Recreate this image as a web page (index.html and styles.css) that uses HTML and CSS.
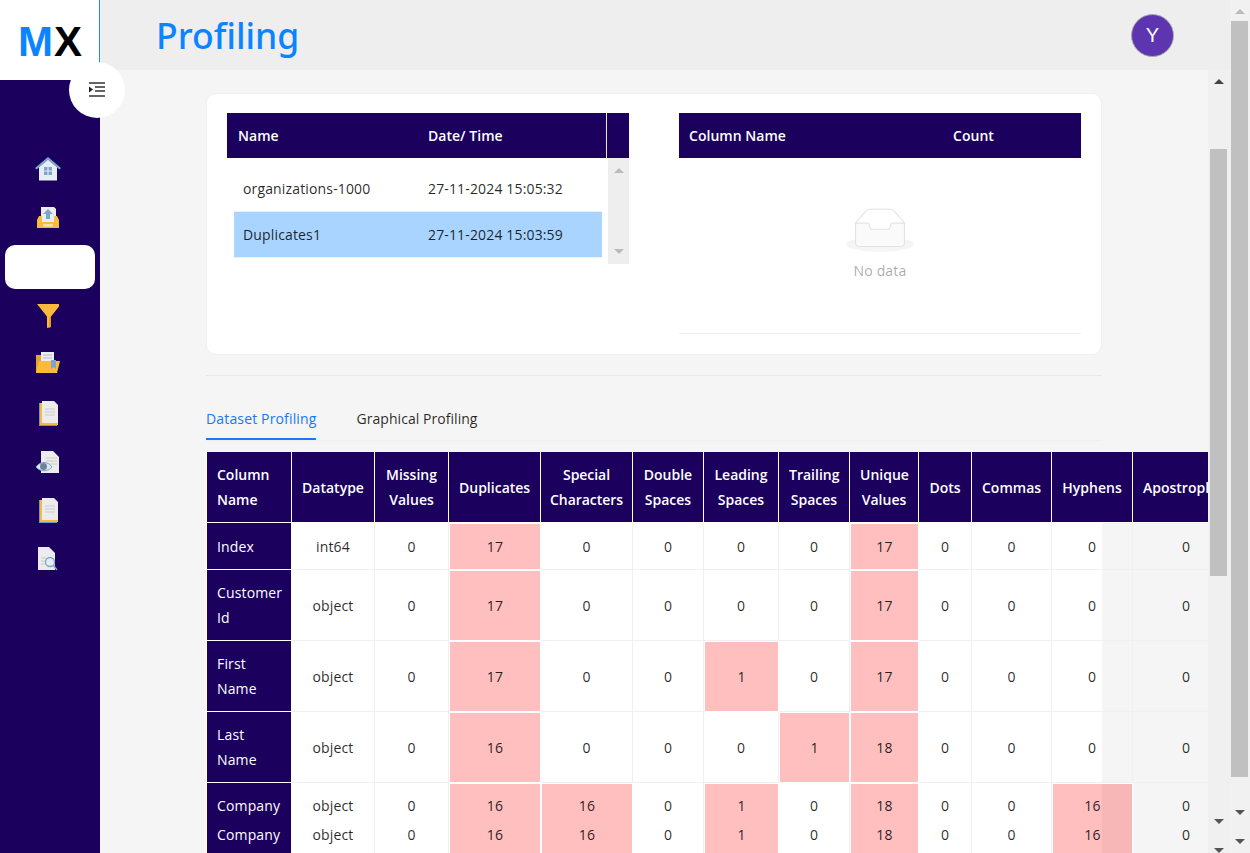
FILE: index.html
```html
<!DOCTYPE html>
<html lang="en">
<head>
    <meta charset="UTF-8">
    <meta name="viewport" content="width=device-width, initial-scale=1.0">
    <title>Profiling</title>
    <link rel="stylesheet" href="styles.css">
</head>
<body>

<aside class="sidebar">
    <div class="logo"><span class="logo-m">M</span>X</div>
    <button class="toggle" type="button" aria-label="Toggle menu">
        <svg width="18" height="16" viewBox="0 0 18 16"><path d="M1 1h16M7 5h10M7 9h10M1 14h16" stroke="#333" stroke-width="1.6" fill="none"/><path d="M1 4.500v6L5 7.500z" fill="#222"/></svg>
    </button>
    <nav class="nav">
        <!-- Home -->
        <a class="nav-item">
            <svg width="28" height="26" viewBox="0 0 28 26"><path d="M5 11L14 3l9 8v13.500H5z" fill="#e9edf3"/><path d="M1 12L14 1l13 11-1.500 1.500L14 4 2.500 13.500z" fill="#7fa6c9"/><path d="M10 11h3.500v3.500H10zM14.500 11H18v3.500h-3.500zM10 15.500h3.500V19H10zM14.500 15.500H18V19h-3.500z" fill="#7fa6c9"/></svg>
        </a>
        <!-- Upload -->
        <a class="nav-item">
            <svg width="26" height="26" viewBox="0 0 26 26"><path d="M6 2h13l2 2v14H6z" fill="#e9edf3"/><path d="M13 4l5 5h-3v5h-4V9H8z" fill="#7fa6c9"/><path d="M4 11h3v6h12v-6h3l2 4v8H2v-8z" fill="#fdb93b"/><path d="M8 19h10v2.500H8z" fill="#fde3a7"/></svg>
        </a>
        <a class="nav-item active"></a>
        <!-- Filter -->
        <a class="nav-item">
            <svg width="24" height="26" viewBox="0 0 24 26"><path d="M1 1h22v2.500l-8 10V24l-4 1V13.500l-8-10z" fill="#fdb93b"/><path d="M13 13.500h2V24l-2 .500z" fill="#e59f24"/></svg>
        </a>
        <!-- Folder -->
        <a class="nav-item lift">
            <svg width="26" height="22" viewBox="0 0 26 22"><path d="M1 3h6v18H1z" fill="#e9a32c"/><path d="M6 0h13v12H6z" fill="#e9edf3"/><path d="M8 3h9M8 6h9" stroke="#bbb" stroke-width="1"/><path d="M1 21l3-12h21l-3 12z" fill="#fdb93b"/><path d="M16 8h5v9l-2.500-2-2.500 2z" fill="#7fa6c9"/></svg>
        </a>
        <!-- Document -->
        <a class="nav-item">
            <svg class="nudge" width="22" height="26" viewBox="0 0 22 26"><path d="M1 3h2v22h16v1H1z" fill="#6f9ac4"/><path d="M2 3h3v20h15v2H2z" fill="#f5b942"/><path d="M4 1h12l4 4v18H4z" fill="#ececec"/><path d="M7 9h10M7 12h10M7 15h10" stroke="#c9c9c9" stroke-width="1.200"/></svg>
        </a>
        <!-- Document with eye -->
        <a class="nav-item">
            <svg width="26" height="24" viewBox="0 0 26 24"><path d="M6 1h12l6 6v16H6z" fill="#ececec"/><path d="M11 8h11M11 11h11M13 14h9" stroke="#c9c9c9" stroke-width="1.200"/><path d="M1 17c4-6 12-6 16 0-4 5-12 5-16 0z" fill="#dce8f3" stroke="#7fa6c9"/><circle cx="8.500" cy="16.500" r="3.500" fill="#6f8299"/></svg>
        </a>
        <!-- Document -->
        <a class="nav-item">
            <svg class="nudge" width="22" height="26" viewBox="0 0 22 26"><path d="M1 3h2v22h16v1H1z" fill="#6f9ac4"/><path d="M2 3h3v20h15v2H2z" fill="#f5b942"/><path d="M4 1h12l4 4v18H4z" fill="#ececec"/><path d="M7 9h10M7 12h10M7 15h10" stroke="#c9c9c9" stroke-width="1.200"/></svg>
        </a>
        <!-- Document with magnifier -->
        <a class="nav-item">
            <svg width="22" height="26" viewBox="0 0 22 26"><path d="M1 1h11l6 6v17H1z" fill="#ececec"/><path d="M4 12h5M4 15h4M4 18h5" stroke="#c9c9c9" stroke-width="1.200"/><circle cx="13" cy="16" r="4.500" fill="#e3ebf3" stroke="#7fa6c9" stroke-width="1.300"/><path d="M16.500 19.500L20 24" stroke="#7fa6c9" stroke-width="1.600"/></svg>
        </a>
    </nav>
</aside>

<div class="page">
    <header class="topbar">
        <h1 class="title">Profiling</h1>
        <div class="avatar">Y</div>
    </header>

    <div class="workspace">
        <main class="main">
            <section class="card">
                <!-- Uploaded files -->
                <div class="panel">
                    <div class="panel-head">
                        <div class="file-name">Name</div>
                        <div class="file-date">Date/ Time</div>
                        <div class="head-gap"></div>
                    </div>
                    <div class="panel-body">
                        <div class="file-rows">
                            <div class="file-row">
                                <div class="row-name">organizations-1000</div>
                                <div>27-11-2024 15:05:32</div>
                            </div>
                            <div class="file-row selected">
                                <div class="row-name">Duplicates1</div>
                                <div>27-11-2024 15:03:59</div>
                            </div>
                        </div>
                        <div class="mini-scroll">
                            <span class="arrow-up"></span>
                            <span class="arrow-down"></span>
                        </div>
                    </div>
                </div>

                <!-- Column counts -->
                <div class="panel">
                    <div class="panel-head">
                        <div class="count-name">Column Name</div>
                        <div>Count</div>
                    </div>
                    <div class="empty">
                        <svg class="empty-icon" width="68" height="44" viewBox="0 0 64 41"><g transform="translate(0 1)" fill="none" fill-rule="evenodd"><ellipse fill="#f5f5f5" cx="32" cy="33" rx="32" ry="7"/><g fill-rule="nonzero" stroke="#e3e3e3"><path d="M55 12.760L44.854 1.258C44.367.474 43.656 0 42.907 0H21.093c-.749 0-1.460.474-1.947 1.257L9 12.761V22h46v-9.240z"/><path d="M41.613 15.931c0-1.605.994-2.930 2.227-2.931H55v18.137C55 33.260 53.680 35 52.050 35h-40.100C10.320 35 9 33.259 9 31.137V13h11.160c1.233 0 2.227 1.323 2.227 2.928v.022c0 1.605 1.005 2.901 2.237 2.901h14.752c1.232 0 2.237-1.308 2.237-2.913v-.007z" fill="#fafafa"/></g></g></svg>
                        <div class="empty-text">No data</div>
                    </div>
                </div>
            </section>

            <hr class="divider">

            <div class="tabs">
                <a class="tab tab-active">Dataset Profiling</a>
                <a class="tab tab-plain">Graphical Profiling</a>
            </div>

            <div class="table-wrap">
                <table class="profile">
                    <thead>
                        <tr>
                            <th class="col-name">Column Name</th>
                            <th class="col-type">Datatype</th>
                            <th class="col-missing">Missing Values</th>
                            <th class="col-dup">Duplicates</th>
                            <th class="col-special">Special Characters</th>
                            <th class="col-double">Double Spaces</th>
                            <th class="col-leading">Leading Spaces</th>
                            <th class="col-trailing">Trailing Spaces</th>
                            <th class="col-unique">Unique Values</th>
                            <th class="col-dots">Dots</th>
                            <th class="col-commas">Commas</th>
                            <th class="col-hyphens">Hyphens</th>
                            <th class="col-apos">Apostrophes</th>
                        </tr>
                    </thead>
                    <tbody>
                        <tr class="short">
                            <td class="name">Index</td><td>int64</td><td>0</td><td class="hit">17</td><td>0</td><td>0</td><td>0</td><td>0</td><td class="hit">17</td><td>0</td><td>0</td><td>0</td><td>0</td>
                        </tr>
                        <tr>
                            <td class="name">Customer Id</td><td>object</td><td>0</td><td class="hit">17</td><td>0</td><td>0</td><td>0</td><td>0</td><td class="hit">17</td><td>0</td><td>0</td><td>0</td><td>0</td>
                        </tr>
                        <tr>
                            <td class="name">First Name</td><td>object</td><td>0</td><td class="hit">17</td><td>0</td><td>0</td><td class="hit">1</td><td>0</td><td class="hit">17</td><td>0</td><td>0</td><td>0</td><td>0</td>
                        </tr>
                        <tr>
                            <td class="name">Last Name</td><td>object</td><td>0</td><td class="hit">16</td><td>0</td><td>0</td><td>0</td><td class="hit">1</td><td class="hit">18</td><td>0</td><td>0</td><td>0</td><td>0</td>
                        </tr>
                        <tr class="stacked">
                            <td class="name">Company<br>Company</td><td>object<br>object</td><td>0<br>0</td><td class="hit">16<br>16</td><td class="hit">16<br>16</td><td>0<br>0</td><td class="hit">1<br>1</td><td>0<br>0</td><td class="hit">18<br>18</td><td>0<br>0</td><td>0<br>0</td><td class="hit">16<br>16</td><td>0<br>0</td>
                        </tr>
                    </tbody>
                </table>
            </div>
        </main>

        <div class="scroll scroll-inner">
            <span class="arrow-up dark"></span>
            <div class="thumb"></div>
            <span class="arrow-down dark"></span>
            <span class="arrow-down dark"></span>
        </div>
    </div>
</div>

<div class="scroll scroll-outer">
    <span class="arrow-up"></span>
    <div class="thumb"></div>
    <span class="arrow-down dark"></span>
    <span class="arrow-down dark"></span>
</div>

</body>
</html>
```

FILE: styles.css
```css
* {
    box-sizing: border-box;
}
body {
    font-family: "Open Sans", "Noto Sans", sans-serif;
    font-size: 14px;
    letter-spacing: 0.15px;
    color: rgba(0, 0, 0, 0.85);
    background-color: #f5f5f5;
    margin: 0;
    height: 853px;
    overflow: hidden;
    display: flex;
}

/* Sidebar */
.sidebar {
    width: 100px;
    flex-shrink: 0;
    background-color: #1b005e;
    position: relative;
}
.logo {
    height: 80px;
    background-color: #fff;
    border-right: 1px solid #1890ff;
    font-family: "Liberation Sans", Arial, sans-serif;
    font-size: 42px;
    font-weight: bold;
    line-height: 83px;
    color: #000;
    padding-left: 18px;
    letter-spacing: 0;
}
.logo-m {
    color: #0a84ff;
    margin-right: 1px;
}
.toggle {
    position: absolute;
    left: 69px;
    top: 62px;
    width: 56px;
    height: 56px;
    border: none;
    border-radius: 50%;
    background-color: #fff;
    display: flex;
    align-items: center;
    justify-content: center;
    padding: 0;
}
.nav {
    display: flex;
    flex-direction: column;
    align-items: center;
    padding-top: 65px;
}
.nav-item {
    width: 90px;
    height: 48.5px;
    display: flex;
    align-items: center;
    justify-content: center;
    margin-left: -4px;
}
.nav-item.active {
    height: 44px;
    margin: 3px 0 3px;
    background-color: #fff;
    border-radius: 10px;
}
.nav-item.lift svg {
    margin-top: -3px;
}
.nudge {
    margin: -1px 0 0 2px;
}

/* Header */
.page {
    width: 1130px;
    flex-shrink: 0;
    display: flex;
    flex-direction: column;
}
.topbar {
    height: 70px;
    flex-shrink: 0;
    background-color: #eeeeee;
    display: flex;
    align-items: center;
    justify-content: space-between;
    padding: 0 56px;
}
.title {
    margin: 0;
    font-family: "Noto Sans", sans-serif;
    font-size: 35.5px;
    font-weight: 500;
    letter-spacing: 0;
    color: #0a84ff;
    line-height: 1;
    position: relative;
    top: 1px;
}
.avatar {
    width: 43px;
    height: 43px;
    border-radius: 50%;
    background-color: #5e35b1;
    border: 1px solid #aaa;
    color: #fff;
    font-family: "Liberation Sans", Arial, sans-serif;
    font-size: 20px;
    display: flex;
    align-items: center;
    justify-content: center;
}

/* Content */
.workspace {
    flex: 1;
    display: flex;
    min-height: 0;
}
.main {
    width: 1108px;
    flex-shrink: 0;
    overflow: hidden;
    padding: 23px 0 0 106px;
    background-color: #f5f5f5;
}
.card {
    width: 896px;
    height: 262px;
    background-color: #fff;
    border: 1px solid #f0f0f0;
    border-radius: 10px;
    padding: 19px 20px;
    display: flex;
    gap: 50px;
}
.panel {
    width: 402px;
}
.panel-head {
    height: 45px;
    background-color: #1b005e;
    color: #fff;
    font-weight: 600;
    letter-spacing: 0.03px;
    display: flex;
    align-items: center;
}
.file-name {
    width: 201px;
    padding-left: 11px;
}
.file-date {
    width: 179px;
    height: 100%;
    line-height: 45px;
    border-right: 1px solid #e8e8e8;
}
.head-gap {
    flex: 1;
}
.panel-body {
    display: flex;
}
.file-rows {
    width: 381px;
    padding: 8px 6px 0 7px;
}
.file-row {
    height: 46px;
    display: flex;
    align-items: center;
    border-bottom: 1px solid #f0f0f0;
}
.file-row.selected {
    background-color: #a8d4ff;
}
.row-name {
    width: 194px;
    padding-left: 9px;
}
.mini-scroll {
    width: 21px;
    height: 106px;
    background-color: #eeeeee;
    display: flex;
    flex-direction: column;
    align-items: center;
    justify-content: space-between;
    padding: 10px 0;
}
.count-name {
    width: 274px;
    padding-left: 10px;
}
.empty {
    height: 176px;
    border-bottom: 1px solid #f0f0f0;
    display: flex;
    flex-direction: column;
    align-items: center;
    padding-top: 50px;
}
.empty-text {
    color: rgba(0, 0, 0, 0.35);
    margin-top: 9px;
}
.divider {
    width: 896px;
    margin: 20px 0 0;
    border: none;
    border-top: 1px solid #e8e8e8;
}

/* Tabs */
.tabs {
    width: 896px;
    height: 65px;
    padding-top: 24px;
    display: flex;
    gap: 40px;
    border-bottom: 1px solid #f0f0f0;
}
.tab {
    height: 40px;
    padding-top: 9px;
    line-height: 19px;
}
.tab-plain {
    letter-spacing: 0.05px;
}
.tab-active {
    color: #1677ff;
    border-bottom: 2px solid #1677ff;
}

/* Profile table */
.table-wrap {
    width: 896px;
    margin-top: 11px;
    padding-left: 1px;
    background-color: #fff;
}
.profile {
    width: 1033px;
    table-layout: fixed;
    border-collapse: separate;
    border-spacing: 0;
    line-height: 25px;
}
.profile th {
    height: 71px;
    padding: 0 10px;
    background-color: #1b005e;
    color: #fff;
    font-weight: 600;
    letter-spacing: 0;
    text-align: center;
    border-right: 1px solid #fff;
    border-bottom: 1px solid #fff;
    overflow: hidden;
}
.profile th.col-name {
    text-align: left;
}
.profile th.col-apos {
    text-align: left;
    white-space: nowrap;
}
.profile th.col-special {
    padding: 0 8px;
    letter-spacing: -0.05px;
}
.col-name { width: 85px; }
.col-type { width: 83px; }
.col-missing { width: 74px; }
.col-dup { width: 92px; }
.col-special { width: 92px; }
.col-double { width: 71px; }
.col-leading { width: 75px; }
.col-trailing { width: 71px; }
.col-unique { width: 69px; }
.col-dots { width: 53px; }
.col-commas { width: 80px; }
.col-hyphens { width: 81px; }
.col-apos { width: 107px; }
.profile td {
    height: 71px;
    padding: 0 4px;
    text-align: center;
    border-right: 1px solid #f0f0f0;
    border-bottom: 1px solid #f0f0f0;
}
.profile .short td {
    height: 47px;
}
.profile td.name {
    background-color: #1b005e;
    color: #fff;
    text-align: left;
    padding: 0 10px;
    border-right-color: #fff;
    border-bottom-color: #fff;
}
.profile td.hit {
    background-color: rgba(255, 0, 0, 0.25);
    background-clip: padding-box;
    border: 1px solid #fff;
}
.profile .stacked td {
    height: 80px;
    line-height: 29px;
    vertical-align: top;
    padding-top: 8px;
}
.profile .stacked td.hit {
    padding-top: 7px;
}

/* Scrollbars */
.scroll {
    display: flex;
    flex-direction: column;
    align-items: center;
    background-color: #f0f0f0;
    flex-shrink: 0;
}
.scroll-inner {
    width: 22px;
    height: 783px;
    padding-top: 9px;
}
.scroll-inner .thumb {
    width: 17px;
    height: 427px;
    margin-top: 65px;
    margin-bottom: 243px;
    margin-left: -1px;
}
.scroll-inner .arrow-up,
.scroll-inner .arrow-down {
    margin-left: -1px;
}
.scroll-inner .arrow-down + .arrow-down {
    margin-top: 24px;
}
.scroll-outer {
    width: 20px;
    height: 853px;
    padding: 9px 0 0 1px;
    align-items: flex-start;
    background-color: #f1f1f1;
}
.scroll-outer .thumb {
    width: 17px;
    height: 756px;
    margin-top: 7px;
    margin-bottom: 33px;
}
.scroll-outer .arrow-up,
.scroll-outer .arrow-down {
    margin-left: 4px;
}
.scroll-outer .arrow-down + .arrow-down {
    margin-top: 24px;
}
.thumb {
    background-color: #c0c0c0;
}
.arrow-up,
.arrow-down {
    width: 0;
    height: 0;
    flex-shrink: 0;
    border-left: 5px solid transparent;
    border-right: 5px solid transparent;
}
.arrow-up {
    border-bottom: 5px solid #bbb;
}
.arrow-down {
    border-top: 5px solid #bbb;
}
.arrow-up.dark {
    border-bottom-color: #444;
}
.arrow-down.dark {
    border-top-color: #555;
}
```
